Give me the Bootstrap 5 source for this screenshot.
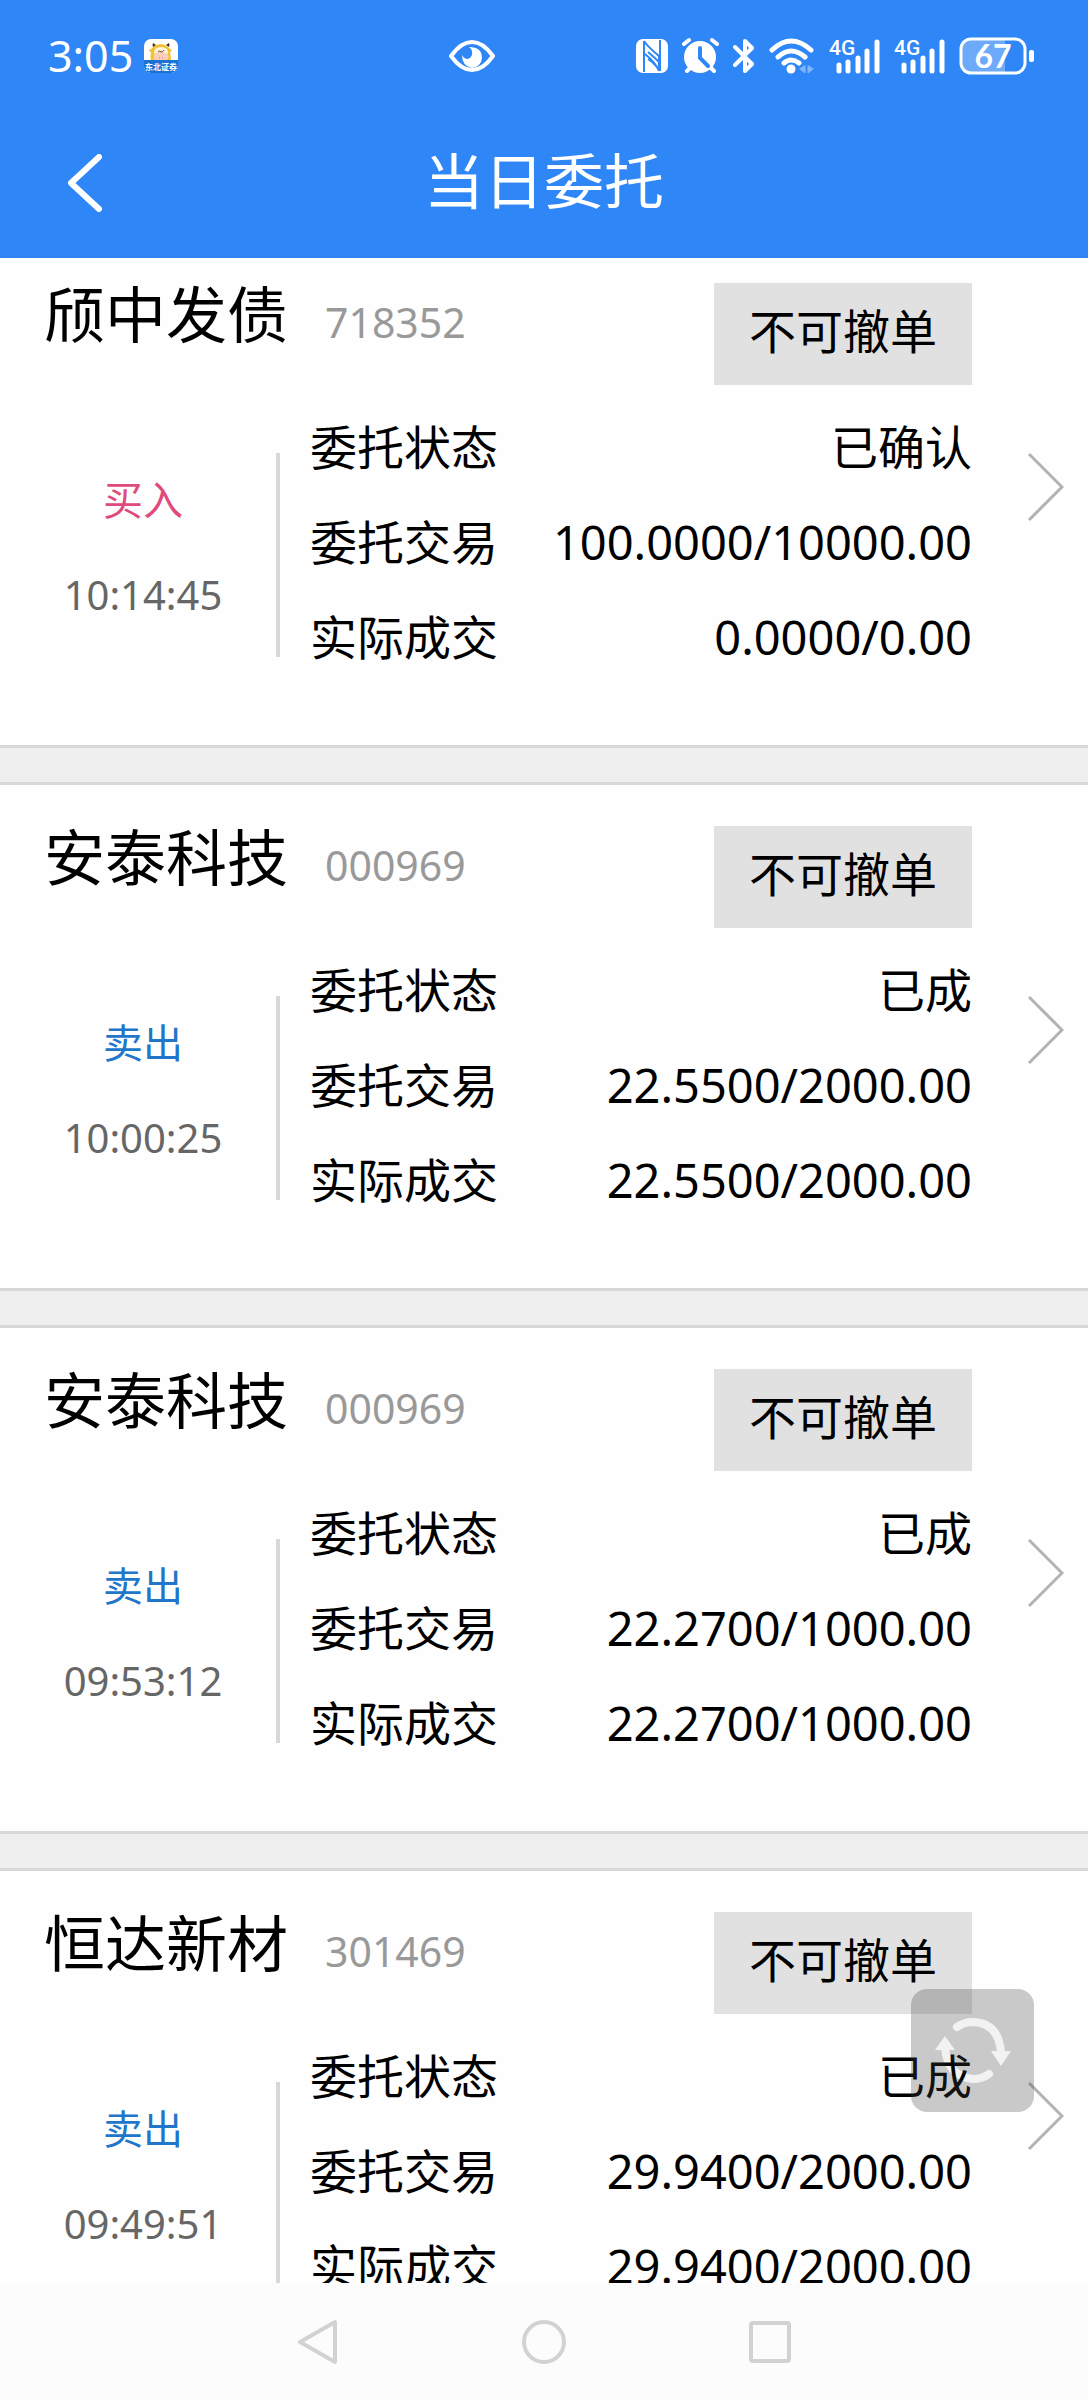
<!DOCTYPE html>
<html lang="zh-CN">
<head>
<meta charset="utf-8">
<meta name="viewport" content="width=device-width, initial-scale=1">
<title>当日委托</title>
<link href="https://cdn.jsdelivr.net/npm/bootstrap@5.3.0/dist/css/bootstrap.min.css" rel="stylesheet">
<style>
body { font-family: "Noto Sans", "Noto Sans CJK SC", sans-serif; color: #000; background: #fdfdfd; }
svg { display: block; flex: none; }
.top-area { background: #2f86f6; color: #fff; }
.status-bar { height: 112px; padding: 0 54px 0 48px; }
.clock { font-size: 43px; line-height: 60px; }
.app-icon { margin-left: 11px; }
.eye-icon { left: 449px; }
.status-icons { gap: 14px; }
.title-bar { height: 146px; }
.title-bar h1 { font-size: 60px; line-height: 80px; font-weight: 400; padding-bottom: 8px; }
.back-btn { left: 62px; }
.order-area { background: #efefef; }
.order-list { gap: 34px; margin-top: -19px; }
.order-item { background: #fefefe; border-top: 3px solid #d8d8d8; border-bottom: 3px solid #d8d8d8; padding: 41px 0 60px; }
.order-head { padding: 0 116px 0 44px; height: 102px; }
.stock-name { font-size: 61px; line-height: 64px; font-weight: 400; }
.stock-code { font-size: 41px; line-height: 64px; color: #999; margin-left: 37px; }
.cancel-btn { width: 258px; height: 102px; font-size: 47px; line-height: 60px; padding: 0 0 6px; }
.cancel-btn:disabled { opacity: 1; background: #e1e1e1; color: #000; }
.order-body { margin-top: 15px; }
.side-col { width: 276px; padding: 52px 0 0 10px; line-height: 95px; font-size: 40px; }
.side-time { color: #666; }
.buy { color: #e04a7c; }
.sell { color: #2176c9; }
.divider { width: 4px; height: 204px; margin-top: 53px; background: #d8d8d8; }
.detail-col { padding-left: 30px; font-size: 47px; line-height: 95px; }
.go-col { width: 116px; padding: 52px 0 0 56px; }
.refresh-btn { width: 123px; height: 123px; right: 54px; bottom: 288px; }
.sys-nav { height: 117px; background: #fcfcfc; }
.sys-nav button { width: 226px; }
</style>
<script src="https://cdn.jsdelivr.net/npm/bootstrap@5.3.0/dist/js/bootstrap.bundle.min.js"></script>
</head>
<body>
<div class="vh-100 d-flex flex-column overflow-hidden position-relative">
  <header class="top-area flex-shrink-0">
    <div class="status-bar d-flex align-items-center position-relative">
      <span class="clock">3:05</span>
      <svg class="app-icon" width="34" height="34" viewBox="0 0 34 34" role="img" aria-label="东北证券">
        <defs><clipPath id="app"><rect width="34" height="34" rx="7"/></clipPath></defs>
        <g clip-path="url(#app)">
          <rect width="34" height="34" fill="#fff"/>
          <path d="M5 11q3-1 4-3q8-6 15 0q1 2 4 3q-1 2-2 2q1 6 1 9H7q-1-4 0-9q-2 0-2-2z" fill="#f2c230"/>
          <path d="M9 8q-1-2 0-4l3 2zM25 8q1-2 0-4l-3 2z" fill="#4a3020"/>
          <ellipse cx="17" cy="13" rx="7" ry="5" fill="#fff3dc"/>
          <ellipse cx="17" cy="18" rx="7.500" ry="5" fill="#fbcfb8"/>
          <path d="M14 13q1-2 3 0q2 0 3-2" fill="none" stroke="#7a5030"/>
          <path d="M15 19h1M18 19h1" stroke="#c77"/>
          <rect y="21" width="34" height="13" fill="#1c72d4"/>
          <text x="17" y="31" font-size="8" font-weight="700" text-anchor="middle" fill="#fff">东北证券</text>
        </g>
      </svg>
      <svg class="eye-icon position-absolute" width="46" height="34" viewBox="0 0 46 34" fill="none" aria-hidden="true">
        <path d="M2 17Q12 3 23 3T44 17Q34 31 23 31T2 17z" stroke="#fff" stroke-width="4"/>
        <path d="M20 8Q33 8 33 19Q32 28 23 29Q13 27 13 16Q15 20 19 20Q24 18 23 12Q22 9 20 8z" fill="#fff"/>
      </svg>
      <div class="status-icons ms-auto d-flex align-items-center" aria-hidden="true">
        <svg width="32" height="38" viewBox="0 0 32 38"><rect y="2" width="32" height="34" rx="7" fill="#fff"/><path d="M8 4v31M24 3v31" stroke="#2f86f6" stroke-width="2"/><path d="M8 4q4 6 15 15v15Q20 26 9 17M12 15q6 5 11 10M12 22q5 3 10 9" fill="none" stroke="#2f86f6" stroke-width="2"/></svg>
        <svg width="37" height="38" viewBox="0 0 37 38" fill="none" stroke="#fff" stroke-linecap="round"><circle cx="18" cy="20" r="16" fill="#fff" stroke="none"/><path d="M2 7l5-4M35 7l-5-4M5 34l4-4M32 34l-4-4" stroke-width="4"/><path d="M18 11v10l8 8" stroke="#2f86f6" stroke-width="4"/></svg>
        <svg width="22" height="38" viewBox="0 0 22 38" fill="none" stroke="#fff" stroke-width="4" stroke-linecap="round" stroke-linejoin="round"><path d="M2 10l17 17-7 7V4l7 7L2 28"/></svg>
        <svg width="46" height="38" viewBox="0 0 46 38" fill="none" stroke="#fff" stroke-width="5" stroke-linecap="round"><path d="M3 13Q22-5 42 13M9 20Q22 8 36 20M15 26Q22 20 30 26"/><circle cx="22" cy="32" r="4.500" fill="#fff" stroke="none"/><path d="M36 29v7l-5-4zM39 29v7l5-4z" fill="#fff" stroke-width="1" opacity=".4"/></svg>
        <svg width="51" height="38" viewBox="0 0 51 38" fill="none" stroke="#fff" stroke-width="5" stroke-linecap="round"><path d="M10 28v6M19 25v9M29 21v13M38 14v20M48 5v29"/><text x="0" y="18" fill="#fff" stroke="none" font-family="Roboto, sans-serif" font-weight="500" font-size="21">4G</text></svg>
        <svg width="51" height="38" viewBox="0 0 51 38" fill="none" stroke="#fff" stroke-width="5" stroke-linecap="round"><path d="M10 28v6M19 25v9M29 21v13M38 14v20M48 5v29"/><text x="0" y="18" fill="#fff" stroke="none" font-family="Roboto, sans-serif" font-weight="500" font-size="21">4G</text></svg>
        <svg width="75" height="50" viewBox="0 -6 75 50"><path d="M10 3h36v32H10q-7 0-7-7V10q0-7 7-7z" fill="#fff" opacity=".3"/><rect x="2" y="2" width="64" height="34" rx="10" fill="none" stroke="#fff" stroke-width="3"/><rect x="70" y="13" width="5" height="12" rx="2" fill="#fff"/><text x="34" y="31" text-anchor="middle" fill="#fff" font-family="Lato, sans-serif" font-weight="700" font-size="32">67</text></svg>
      </div>
    </div>
    <div class="title-bar d-flex align-items-center justify-content-center position-relative">
      <button class="back-btn btn border-0 p-0 position-absolute" aria-label="返回"><svg width="46" height="62" viewBox="0 0 46 62" fill="none" stroke="#fff" stroke-width="6" stroke-linecap="round" stroke-linejoin="round"><path d="M37 3L9 29l28 26"/></svg></button>
      <h1 class="m-0">当日委托</h1>
    </div>
  </header>

  <main class="order-area flex-grow-1 overflow-hidden">
    <div class="order-list d-flex flex-column">
      <article class="order-item">
        <div class="order-head d-flex justify-content-between">
          <div class="d-flex align-items-baseline"><h2 class="stock-name m-0">颀中发债</h2><span class="stock-code">718352</span></div>
          <button class="cancel-btn btn rounded-0 border-0" disabled>不可撤单</button>
        </div>
        <div class="order-body d-flex">
          <div class="side-col text-center"><div class="buy">买入</div><div class="side-time">10:14:45</div></div>
          <div class="divider"></div>
          <div class="detail-col flex-grow-1">
            <div class="d-flex justify-content-between"><span>委托状态</span><span>已确认</span></div>
            <div class="d-flex justify-content-between"><span>委托交易</span><span>100.0000/10000.00</span></div>
            <div class="d-flex justify-content-between"><span>实际成交</span><span>0.0000/0.00</span></div>
          </div>
          <a class="go-col" href="#" aria-label="详情"><svg width="36" height="70" viewBox="0 0 36 70" fill="none" stroke="#b2b2b2" stroke-width="3"><path d="M1 2l33 33L1 68"/></svg></a>
        </div>
      </article>
      <article class="order-item">
        <div class="order-head d-flex justify-content-between">
          <div class="d-flex align-items-baseline"><h2 class="stock-name m-0">安泰科技</h2><span class="stock-code">000969</span></div>
          <button class="cancel-btn btn rounded-0 border-0" disabled>不可撤单</button>
        </div>
        <div class="order-body d-flex">
          <div class="side-col text-center"><div class="sell">卖出</div><div class="side-time">10:00:25</div></div>
          <div class="divider"></div>
          <div class="detail-col flex-grow-1">
            <div class="d-flex justify-content-between"><span>委托状态</span><span>已成</span></div>
            <div class="d-flex justify-content-between"><span>委托交易</span><span>22.5500/2000.00</span></div>
            <div class="d-flex justify-content-between"><span>实际成交</span><span>22.5500/2000.00</span></div>
          </div>
          <a class="go-col" href="#" aria-label="详情"><svg width="36" height="70" viewBox="0 0 36 70" fill="none" stroke="#b2b2b2" stroke-width="3"><path d="M1 2l33 33L1 68"/></svg></a>
        </div>
      </article>
      <article class="order-item">
        <div class="order-head d-flex justify-content-between">
          <div class="d-flex align-items-baseline"><h2 class="stock-name m-0">安泰科技</h2><span class="stock-code">000969</span></div>
          <button class="cancel-btn btn rounded-0 border-0" disabled>不可撤单</button>
        </div>
        <div class="order-body d-flex">
          <div class="side-col text-center"><div class="sell">卖出</div><div class="side-time">09:53:12</div></div>
          <div class="divider"></div>
          <div class="detail-col flex-grow-1">
            <div class="d-flex justify-content-between"><span>委托状态</span><span>已成</span></div>
            <div class="d-flex justify-content-between"><span>委托交易</span><span>22.2700/1000.00</span></div>
            <div class="d-flex justify-content-between"><span>实际成交</span><span>22.2700/1000.00</span></div>
          </div>
          <a class="go-col" href="#" aria-label="详情"><svg width="36" height="70" viewBox="0 0 36 70" fill="none" stroke="#b2b2b2" stroke-width="3"><path d="M1 2l33 33L1 68"/></svg></a>
        </div>
      </article>
      <article class="order-item">
        <div class="order-head d-flex justify-content-between">
          <div class="d-flex align-items-baseline"><h2 class="stock-name m-0">恒达新材</h2><span class="stock-code">301469</span></div>
          <button class="cancel-btn btn rounded-0 border-0" disabled>不可撤单</button>
        </div>
        <div class="order-body d-flex">
          <div class="side-col text-center"><div class="sell">卖出</div><div class="side-time">09:49:51</div></div>
          <div class="divider"></div>
          <div class="detail-col flex-grow-1">
            <div class="d-flex justify-content-between"><span>委托状态</span><span>已成</span></div>
            <div class="d-flex justify-content-between"><span>委托交易</span><span>29.9400/2000.00</span></div>
            <div class="d-flex justify-content-between"><span>实际成交</span><span>29.9400/2000.00</span></div>
          </div>
          <a class="go-col" href="#" aria-label="详情"><svg width="36" height="70" viewBox="0 0 36 70" fill="none" stroke="#b2b2b2" stroke-width="3"><path d="M1 2l33 33L1 68"/></svg></a>
        </div>
      </article>
    </div>
  </main>

  <button class="refresh-btn btn border-0 p-0 position-absolute" aria-label="刷新">
    <svg width="123" height="123" viewBox="0 0 123 123">
      <mask id="arrows">
        <rect width="123" height="123" fill="#fff"/>
        <path d="M46 38Q53 33 62 33Q88 34 90 64M78 85Q71 90 62 90Q36 87 34 58" fill="none" stroke="#383838" stroke-width="8" stroke-linecap="round"/>
        <path d="M80 62h20L90 77zM24 61h20L34 47z" fill="#383838"/>
      </mask>
      <rect width="123" height="123" rx="16" fill="#414141" fill-opacity=".28" mask="url(#arrows)"/>
    </svg>
  </button>

  <nav class="sys-nav flex-shrink-0 d-flex justify-content-center align-items-center">
    <button class="btn border-0 p-0 d-flex justify-content-center" aria-label="返回"><svg width="40" height="46" viewBox="0 0 40 46" fill="none" stroke="#d2d2d2" stroke-width="4" stroke-linejoin="round"><path d="M37 3v40L2 23z"/></svg></button>
    <button class="btn border-0 p-0 d-flex justify-content-center" aria-label="主页"><svg width="46" height="46" viewBox="0 0 46 46" fill="none" stroke="#d2d2d2" stroke-width="4"><circle cx="23" cy="23" r="20"/></svg></button>
    <button class="btn border-0 p-0 d-flex justify-content-center" aria-label="最近任务"><svg width="42" height="42" viewBox="0 0 42 42" fill="none" stroke="#d2d2d2" stroke-width="4"><rect x="2" y="2" width="38" height="38" rx="2"/></svg></button>
  </nav>
</div>
</body>
</html>
